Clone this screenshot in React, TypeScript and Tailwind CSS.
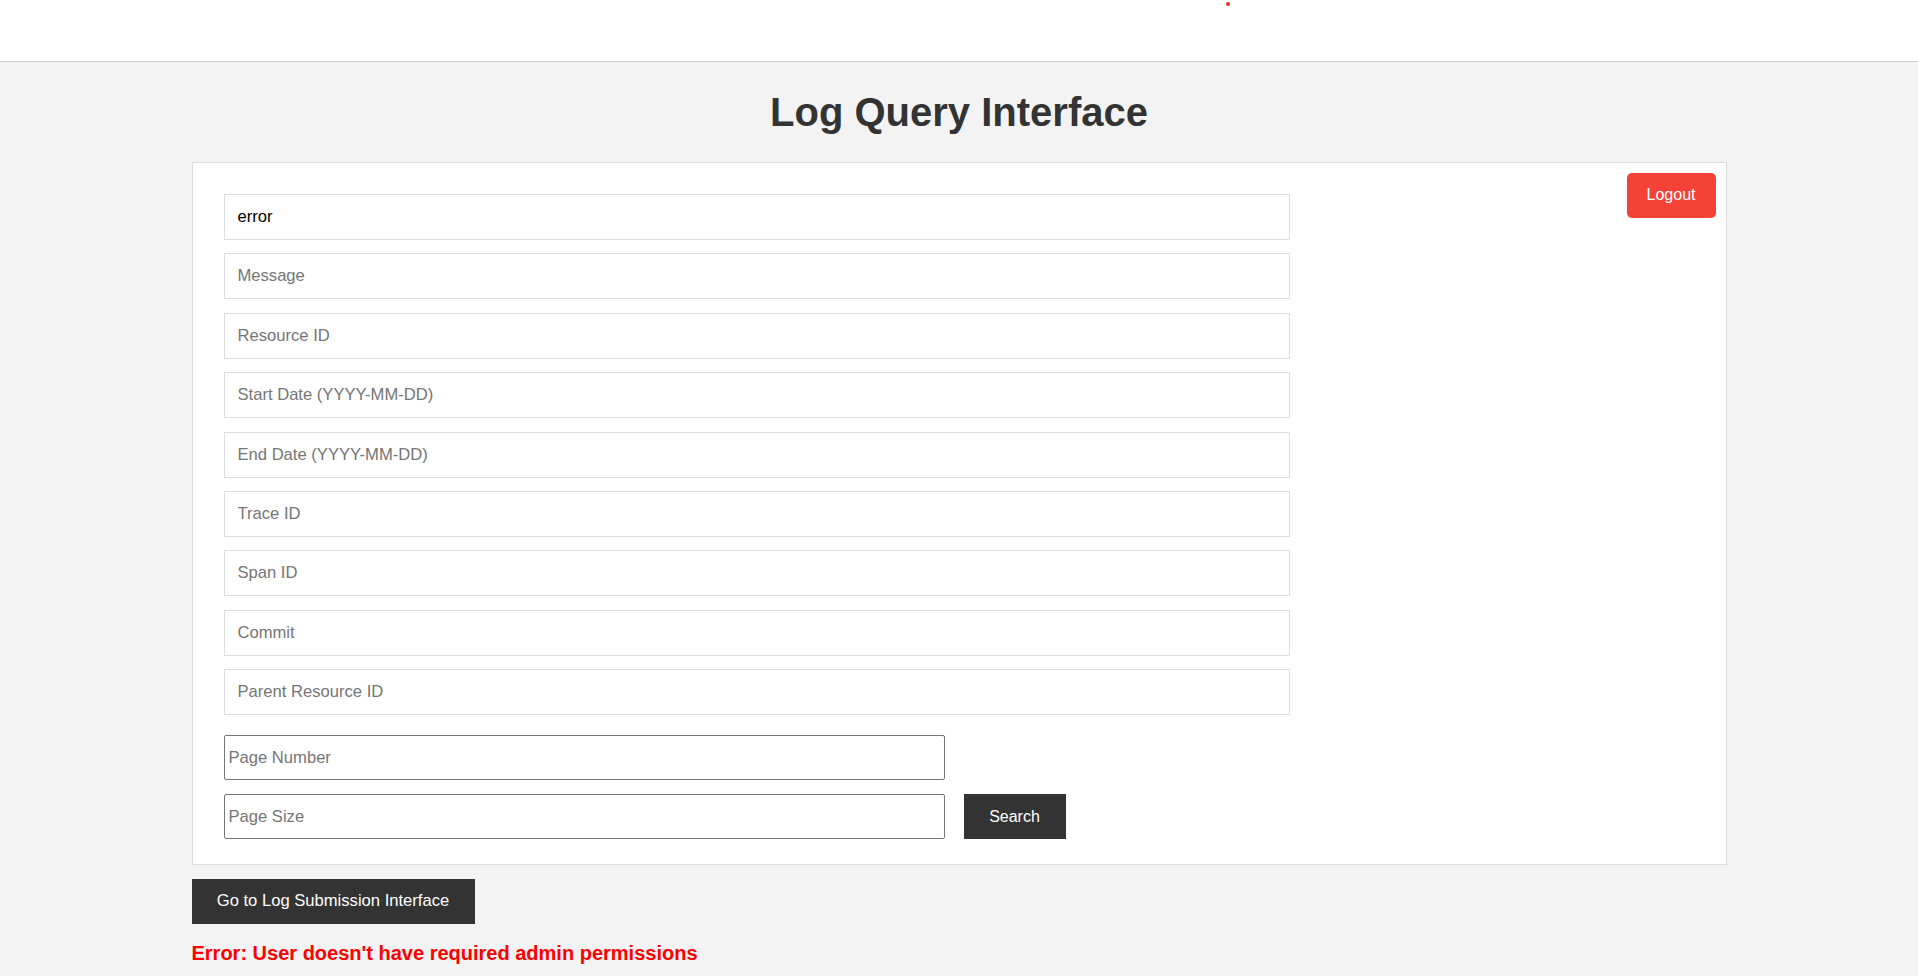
import { useState } from 'react';

const FIELDS = [
  { key: 'level', label: 'Level', initial: 'error' },
  { key: 'message', label: 'Message' },
  { key: 'resourceId', label: 'Resource ID' },
  { key: 'startDate', label: 'Start Date (YYYY-MM-DD)' },
  { key: 'endDate', label: 'End Date (YYYY-MM-DD)' },
  { key: 'traceId', label: 'Trace ID' },
  { key: 'spanId', label: 'Span ID' },
  { key: 'commit', label: 'Commit' },
  { key: 'parentResourceId', label: 'Parent Resource ID' },
];

export default function App() {
  const [values, setValues] = useState<Record<string, string>>(() => {
    const v: Record<string, string> = {};
    FIELDS.forEach((f) => { v[f.key] = f.initial || ''; });
    return v;
  });
  const [page, setPage] = useState('');
  const [size, setSize] = useState('');
  const [err] = useState("Error: User doesn't have required admin permissions");

  return (
    <div className="min-h-screen bg-[#f3f3f3] font-['Liberation_Sans',Arial,sans-serif] text-black">
      <header className="relative h-[62px] bg-white border-b border-[#cccccc]">
        {/* tiny loading dot */}
        <span className="absolute left-[1226px] top-[2px] w-[4px] h-[4px] rounded-full bg-[#e8302a]" />
      </header>

      <h1 className="mt-[19.5px] mb-[20px] text-center text-[40px] leading-normal font-bold text-[#333333]">
        Log Query Interface
      </h1>

      <main className="mx-auto w-[1535px]">
        <div className="flex items-start bg-white border border-[#dddddd] pl-[31px] pr-[10px] pt-[10px] pb-[25px]">
          <form
            className="mt-[21.5px] flex flex-col"
            onSubmit={(e) => e.preventDefault()}
          >
            <div className="flex flex-col gap-[13.4px] w-[1066px]">
              {FIELDS.map((f) => (
                <input
                  key={f.key}
                  value={values[f.key]}
                  onChange={(e) => setValues({ ...values, [f.key]: e.target.value })}
                  placeholder={f.key === 'level' ? 'Level' : f.label}
                  className="h-[46px] w-full border border-[#dddddd] bg-white px-[13px] text-[16.6px] text-black outline-none placeholder:text-[#757575]"
                />
              ))}
            </div>

            <div className="mt-[20px] flex flex-col gap-[14px]">
              <input
                value={page}
                onChange={(e) => setPage(e.target.value)}
                placeholder="Page Number"
                className="h-[45px] w-[721px] rounded-[2px] border border-[#767676] bg-white px-[4px] text-[16.6px] outline-none placeholder:text-[#757575]"
              />
              <div className="flex items-center gap-[19px]">
                <input
                  value={size}
                  onChange={(e) => setSize(e.target.value)}
                  placeholder="Page Size"
                  className="h-[45px] w-[721px] rounded-[2px] border border-[#767676] bg-white px-[4px] text-[16.6px] outline-none placeholder:text-[#757575]"
                />
                <button type="submit" className="h-[45px] w-[102px] bg-[#333333] text-[16px] text-white">
                  Search
                </button>
              </div>
            </div>
          </form>

          <button className="ml-auto h-[45px] w-[89px] rounded-[5px] bg-[#f44336] text-[16px] text-white">
            Logout
          </button>
        </div>

        <button className="mt-[13.5px] h-[45px] w-[283px] bg-[#333333] text-[16.6px] text-white">
          Go to Log Submission Interface
        </button>

        {err && (
          <p className="mt-[14.5px] text-[20px] leading-normal font-bold text-[#ff0000]">{err}</p>
        )}
      </main>
    </div>
  );
}
